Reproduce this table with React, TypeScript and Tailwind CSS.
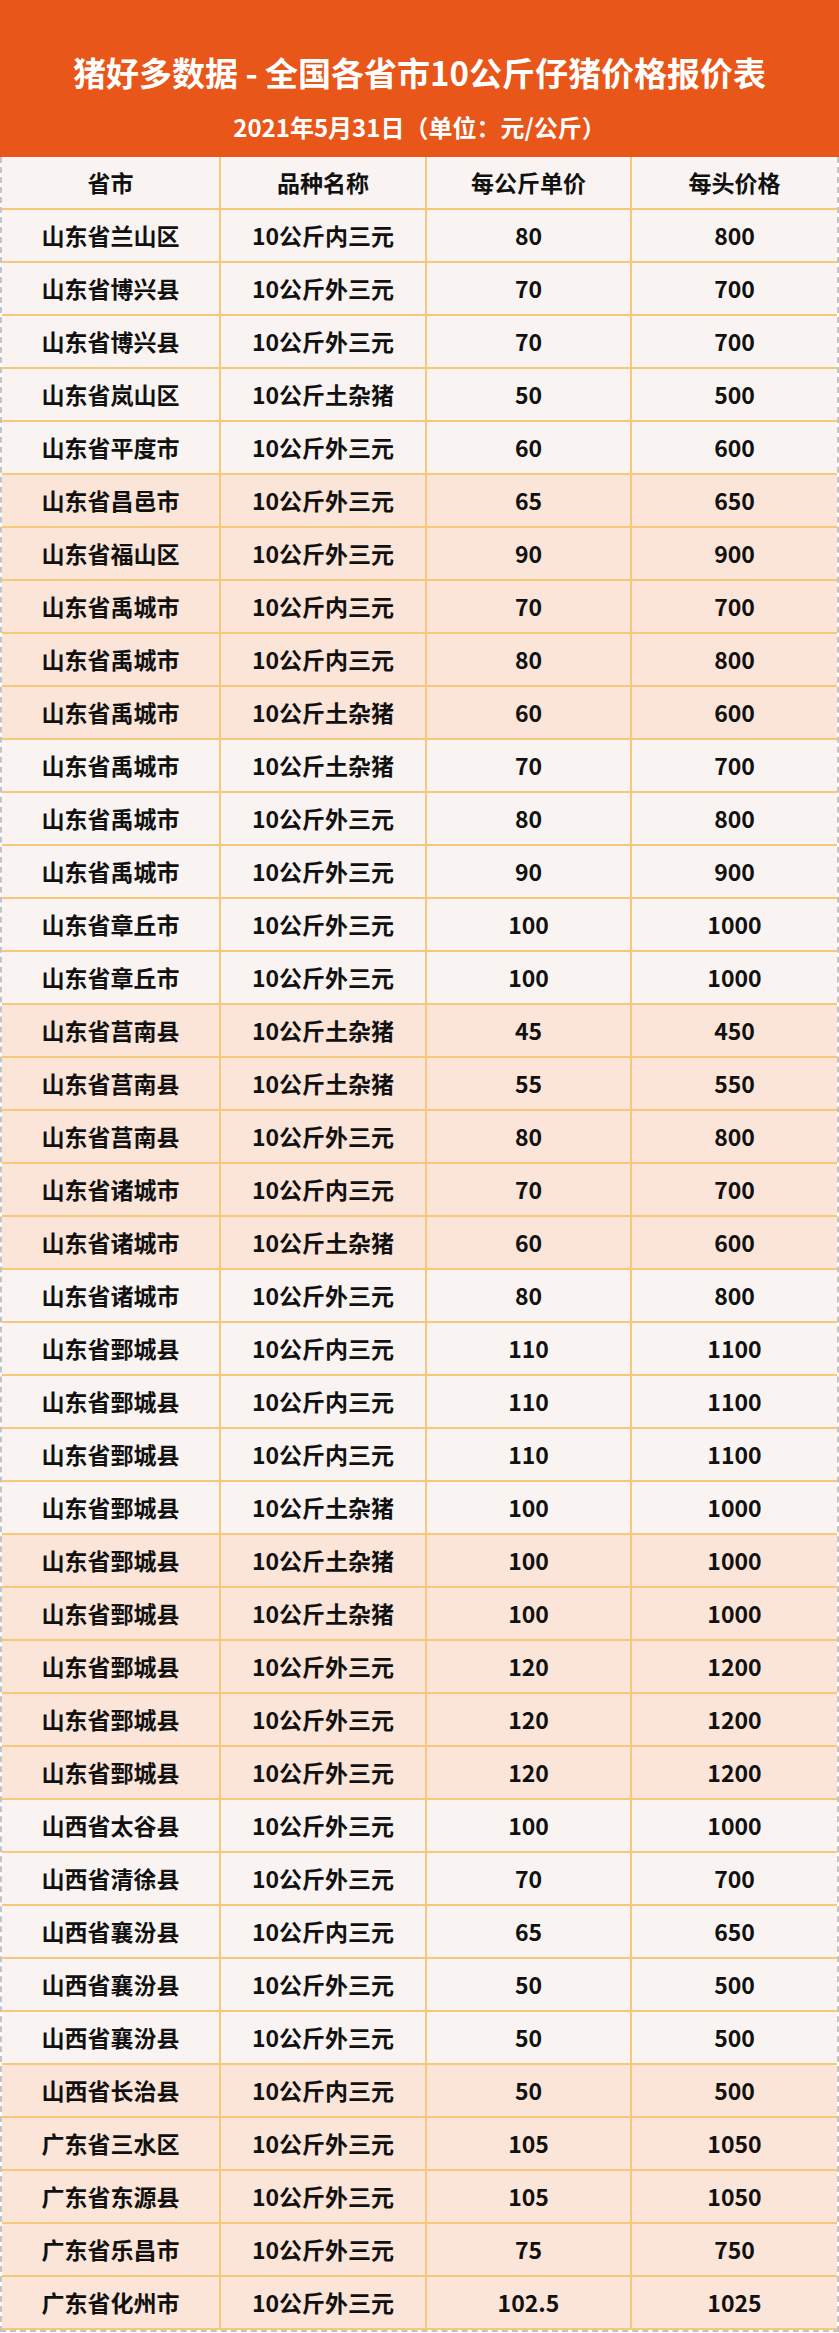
const rows: [string, string, string, string][] = [
  ['山东省兰山区', '10公斤内三元', '80', '800'],
  ['山东省博兴县', '10公斤外三元', '70', '700'],
  ['山东省博兴县', '10公斤外三元', '70', '700'],
  ['山东省岚山区', '10公斤土杂猪', '50', '500'],
  ['山东省平度市', '10公斤外三元', '60', '600'],
  ['山东省昌邑市', '10公斤外三元', '65', '650'],
  ['山东省福山区', '10公斤外三元', '90', '900'],
  ['山东省禹城市', '10公斤内三元', '70', '700'],
  ['山东省禹城市', '10公斤内三元', '80', '800'],
  ['山东省禹城市', '10公斤土杂猪', '60', '600'],
  ['山东省禹城市', '10公斤土杂猪', '70', '700'],
  ['山东省禹城市', '10公斤外三元', '80', '800'],
  ['山东省禹城市', '10公斤外三元', '90', '900'],
  ['山东省章丘市', '10公斤外三元', '100', '1000'],
  ['山东省章丘市', '10公斤外三元', '100', '1000'],
  ['山东省莒南县', '10公斤土杂猪', '45', '450'],
  ['山东省莒南县', '10公斤土杂猪', '55', '550'],
  ['山东省莒南县', '10公斤外三元', '80', '800'],
  ['山东省诸城市', '10公斤内三元', '70', '700'],
  ['山东省诸城市', '10公斤土杂猪', '60', '600'],
  ['山东省诸城市', '10公斤外三元', '80', '800'],
  ['山东省鄄城县', '10公斤内三元', '110', '1100'],
  ['山东省鄄城县', '10公斤内三元', '110', '1100'],
  ['山东省鄄城县', '10公斤内三元', '110', '1100'],
  ['山东省鄄城县', '10公斤土杂猪', '100', '1000'],
  ['山东省鄄城县', '10公斤土杂猪', '100', '1000'],
  ['山东省鄄城县', '10公斤土杂猪', '100', '1000'],
  ['山东省鄄城县', '10公斤外三元', '120', '1200'],
  ['山东省鄄城县', '10公斤外三元', '120', '1200'],
  ['山东省鄄城县', '10公斤外三元', '120', '1200'],
  ['山西省太谷县', '10公斤外三元', '100', '1000'],
  ['山西省清徐县', '10公斤外三元', '70', '700'],
  ['山西省襄汾县', '10公斤内三元', '65', '650'],
  ['山西省襄汾县', '10公斤外三元', '50', '500'],
  ['山西省襄汾县', '10公斤外三元', '50', '500'],
  ['山西省长治县', '10公斤内三元', '50', '500'],
  ['广东省三水区', '10公斤外三元', '105', '1050'],
  ['广东省东源县', '10公斤外三元', '105', '1050'],
  ['广东省乐昌市', '10公斤外三元', '75', '750'],
  ['广东省化州市', '10公斤外三元', '102.5', '1025'],
]

const headers = ['省市', '品种名称', '每公斤单价', '每头价格']

function Row({ cells, bg }: { cells: string[]; bg: string }) {
  return (
    <div className={`grid grid-cols-[219px_206px_205px_1fr] h-[53px] border-b-2 border-[#f8c87a] ${bg}`}>
      {cells.map((c, i) => (
        <div
          key={i}
          className={`flex items-center justify-center text-[23px] font-bold text-[#111] ${i < 3 ? 'border-r-2 border-[#f8c87a]' : ''}`}
        >
          {c}
        </div>
      ))}
    </div>
  )
}

export default function App() {
  return (
    <div
      className="w-[839px] bg-white"
      style={{ fontFamily: '"Noto Sans CJK SC", "Noto Sans", sans-serif' }}
    >
      <div className="h-[157px] bg-[#e8561a] flex flex-col items-center text-white font-bold">
        <div className="pt-[50px] text-[33px] leading-[44px]">猪好多数据 - 全国各省市10公斤仔猪价格报价表</div>
        <div className="mt-[18px] text-[24px] leading-[30px]">2021年5月31日（单位：元/公斤）</div>
      </div>
      <div className="border-2 border-t-0 border-dashed border-[#c4c4c4]">
        <Row cells={headers} bg="bg-[#f9f4f1]" />
        {rows.map((r, i) => (
          <Row key={i} cells={r} bg={Math.floor(i / 5) % 2 === 0 ? 'bg-[#f9f4f1]' : 'bg-[#fbe4d8]'} />
        ))}
      </div>
    </div>
  )
}
